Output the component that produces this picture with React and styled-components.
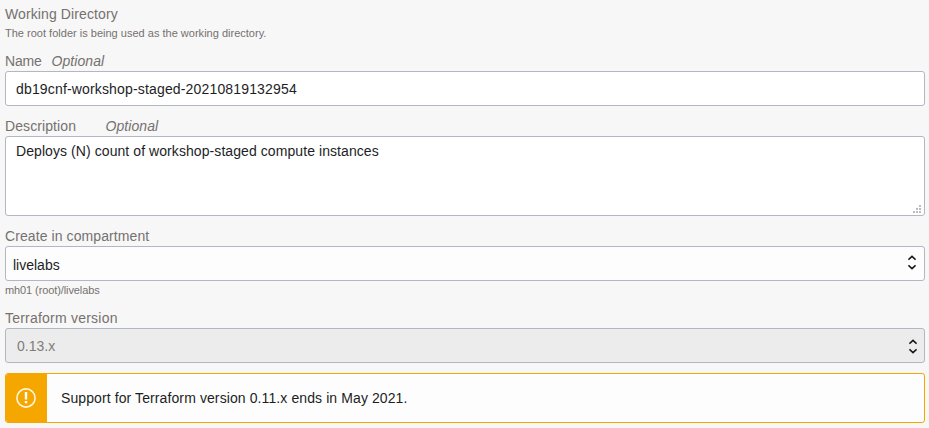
import React from "react";
import styled, { createGlobalStyle } from "styled-components";

const GlobalStyle = createGlobalStyle`
  * { box-sizing: border-box; }
  body {
    margin: 0;
    background: #f7f7f7;
    font-family: "Liberation Sans", Arial, sans-serif;
    font-size: 14px;
    color: #221e1f;
  }
`;

const Form = styled.main`
  display: flex;
  flex-direction: column;
  width: 929px;
  height: 428px;
  padding: 4px 4px 0 5px;
  background: #f7f7f7;
`;

const Field = styled.section`
  display: flex;
  flex-direction: column;
  margin-bottom: ${(p) => p.$gap}px;
`;

const Label = styled.div`
  display: flex;
  gap: ${(p) => p.$gap || 0}px;
  height: 20px;
  line-height: 20px;
  color: #75716f;
  letter-spacing: ${(p) => p.$spacing || 0}px;
`;

const Optional = styled.em`
  letter-spacing: 0.06px;
`;

const Hint = styled.div`
  height: 18px;
  line-height: 18px;
  font-size: 11px;
  color: #75716f;
  letter-spacing: ${(p) => p.$spacing || 0}px;
`;

const Control = styled.div`
  display: flex;
  justify-content: space-between;
  align-items: ${(p) => (p.$multiline ? "flex-start" : "center")};
  height: ${(p) => (p.$multiline ? 80 : 35)}px;
  padding: ${(p) => p.$padding || "0 10px"};
  border: 1px solid #b3b6c3;
  border-radius: 3px;
  line-height: 20px;
  background: ${(p) => p.$background || "#fff"};
  color: ${(p) => (p.$disabled ? "#807c7b" : "#221e1f")};
  letter-spacing: ${(p) => p.$spacing || 0}px;
`;

const SelectValue = styled.span`
  padding-top: ${(p) => p.$drop || 0}px;
`;

const Grip = styled.svg`
  align-self: flex-end;
  flex: none;
`;

const Alert = styled.div`
  display: flex;
  height: 50px;
  border: 1px solid #f5a700;
  border-radius: 3px;
  background: #fdfdfd;
  overflow: hidden;
`;

const AlertBadge = styled.div`
  display: flex;
  align-items: center;
  justify-content: center;
  width: 41px;
  padding-right: 1px;
  background: #f5a700;
`;

const AlertText = styled.div`
  padding-left: 14px;
  line-height: 48px;
  letter-spacing: 0.1px;
`;

const Arrows = () => (
  <svg width="8" height="15" viewBox="0 0 8 15" fill="none" stroke="#171717" strokeWidth="1.6">
    <path d="M.4 4.7 4 1.3 7.6 4.7M.4 10.3 4 13.7 7.6 10.3" />
  </svg>
);

const ResizeGrip = () => (
  <Grip width="8" height="8" viewBox="0 0 8 8" fill="#bdbdbf" shapeRendering="crispEdges">
    <path d="M6 0h2v2H6zM3 3h2v2H3zM6 3h2v2H6zM0 6h2v2H0zM3 6h2v2H3zM6 6h2v2H6z" />
  </Grip>
);

export default function App() {
  return (
    <>
      <GlobalStyle />
      <Form>
        <Field $gap={9}>
          <Label $spacing={0.11}>Working Directory</Label>
          <Hint $spacing={0.01}>The root folder is being used as the working directory.</Hint>
        </Field>
        <Field $gap={10}>
          <Label $gap={10} $spacing={-0.2}>
            <span>Name</span>
            <Optional>Optional</Optional>
          </Label>
          <Control $spacing={0.16}>db19cnf-workshop-staged-20210819132954</Control>
        </Field>
        <Field $gap={10}>
          <Label $gap={29.5} $spacing={0.09}>
            <span>Description</span>
            <Optional>Optional</Optional>
          </Label>
          <Control $multiline $padding="4px 3px 2px 10px" $spacing={0.075}>
            <span>Deploys (N) count of workshop-staged compute instances</span>
            <ResizeGrip />
          </Control>
        </Field>
        <Field $gap={9}>
          <Label $spacing={0.09}>Create in compartment</Label>
          <Control $padding="0 8px 2px 7px" $background="#fdfdfd">
            <SelectValue $drop={4}>livelabs</SelectValue>
            <Arrows />
          </Control>
          <Hint $spacing={-0.1}>mh01 (root)/livelabs</Hint>
        </Field>
        <Field $gap={10}>
          <Label $spacing={0.22}>Terraform version</Label>
          <Control $padding="1px 7px 0 11px" $background="#ececec" $disabled>
            <SelectValue>0.13.x</SelectValue>
            <Arrows />
          </Control>
        </Field>
        <Alert>
          <AlertBadge>
            <svg width="20" height="20" viewBox="0 0 20 20" fill="none">
              <circle cx="10" cy="10" r="9.1" stroke="#fff4dc" strokeWidth="1.6" />
              <path d="M8.8 4h2.4v7.5H8.8zM8.8 13h2.4v2.2H8.8z" fill="#fff" />
            </svg>
          </AlertBadge>
          <AlertText>Support for Terraform version 0.11.x ends in May 2021.</AlertText>
        </Alert>
      </Form>
    </>
  );
}
